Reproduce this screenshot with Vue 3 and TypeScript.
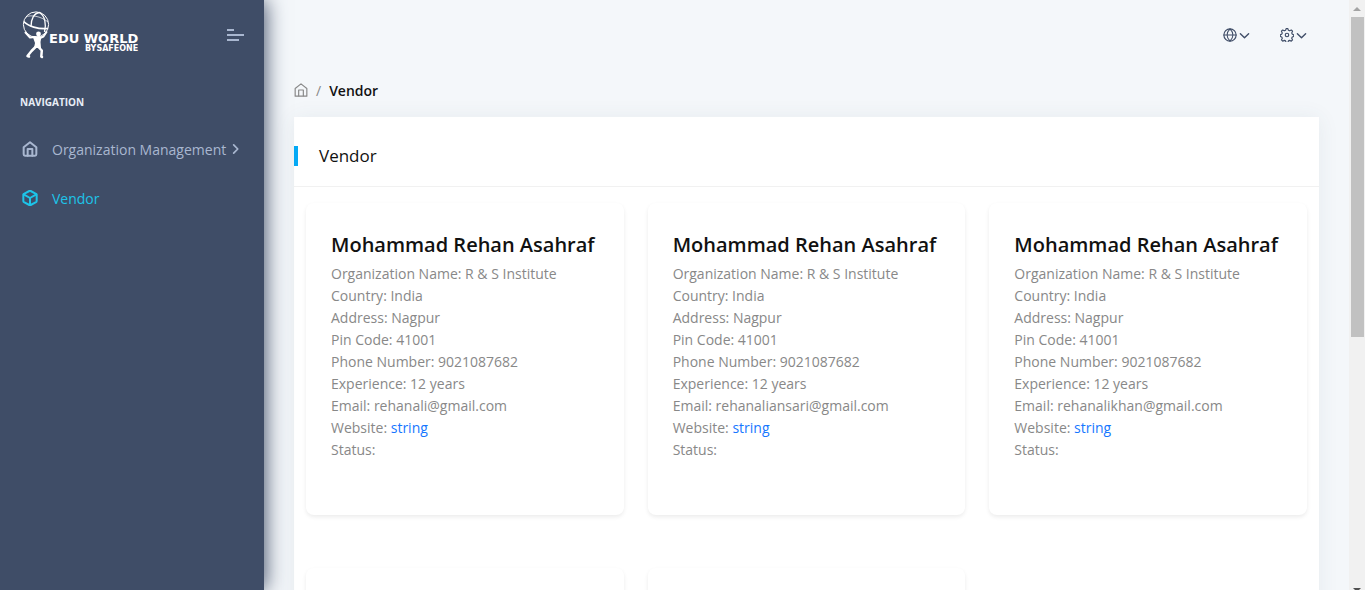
<script setup lang="ts">
interface Vendor {
  id: number
  name: string
  email: string
}

const vendors: Vendor[] = [
  { id: 1, name: 'Mohammad Rehan Asahraf', email: 'rehanali@gmail.com' },
  { id: 2, name: 'Mohammad Rehan Asahraf', email: 'rehanaliansari@gmail.com' },
  { id: 3, name: 'Mohammad Rehan Asahraf', email: 'rehanalikhan@gmail.com' },
]

const pending: number[] = [4, 5]
</script>

<template>
  <div class="layout">
    <aside class="sidebar">
      <div class="brand-row">
        <a class="brand" href="#" aria-label="Edu World by SafeOne">
          <svg class="brand-figure" width="30" height="50" viewBox="0 0 30 50" aria-hidden="true">
            <g fill="none" stroke="#fff">
              <circle cx="15" cy="14.500" r="12.600" stroke-width="1" />
              <path d="M2.700 11.500 C7 16 17 19.500 27 18.500" stroke-width="1.700" />
              <path d="M5 7 C9 4.500 20 6 27 12" stroke-width=".7" />
              <path d="M10 16.500 C10 9 13 3 18.500 2.500 C24 6 25.500 14 23.500 22" stroke-width="1.300" />
            </g>
            <g fill="none" stroke="#fff" stroke-linecap="round" stroke-linejoin="round">
              <path d="M4.500 22.500 L9 27.500 L14 27" stroke-width="2" />
              <path d="M25.500 22 L22.500 26.500 L19 28" stroke-width="2" />
              <path d="M15 36.500 L10.500 41 L6.500 46 L8 46.500" stroke-width="2.500" />
              <path d="M17 36.500 L20.800 40.500 L20.300 46.500 L21 47" stroke-width="2.500" />
            </g>
            <circle cx="17.500" cy="24" r="2.400" fill="#fff" />
            <path d="M11.500 26 L20.500 26.500 L19.500 32 L20 38 L13 38 L14 33 Z" fill="#fff" />
          </svg>
          <span class="brand-words">
            <span class="brand-name">EDU WORLD</span>
            <span class="brand-by">BYSAFEONE</span>
          </span>
        </a>
        <button class="burger" type="button" aria-label="Toggle menu">
          <i class="bar short"></i>
          <i class="bar long"></i>
          <i class="bar mid"></i>
        </button>
      </div>
      <nav>
        <h6 class="caption">NAVIGATION</h6>
        <a class="nav-item" href="#">
          <svg class="feather" width="16" height="16" viewBox="0 0 24 24">
            <path d="M2.500 9.500 12 2l9.500 7.500V20a2 2 0 0 1-2 2h-15a2 2 0 0 1-2-2z" />
            <path d="M8.500 22V12h7v10" />
          </svg>
          <span>Organization Management</span>
          <svg class="feather arrow" width="14" height="14" viewBox="0 0 24 24"><path d="m8 19 7-7-7-7" /></svg>
        </a>
        <a class="nav-item active" href="#">
          <svg class="feather" width="16" height="16" viewBox="0 0 24 24">
            <path d="M22 16.500v-9a2 2 0 0 0-1-1.700l-8-4.300a2 2 0 0 0-2 0L3 5.800a2 2 0 0 0-1 1.700v9a2 2 0 0 0 1 1.700l8 4.300a2 2 0 0 0 2 0l8-4.300a2 2 0 0 0 1-1.700z" />
            <path d="M2.500 6.500 12 12l9.500-5.500M12 22.500V12" />
          </svg>
          <span>Vendor</span>
        </a>
      </nav>
    </aside>

    <div class="page">
      <header class="topbar">
        <button class="tool" type="button" aria-label="Language">
          <svg class="feather" width="14" height="14" viewBox="0 0 24 24">
            <circle cx="12" cy="12" r="10.500" />
            <path d="M1.500 12h21M12 1.500c6.500 6.500 6.500 14.500 0 21c-6.500-6.500-6.500-14.500 0-21z" />
          </svg>
          <svg class="feather" width="11" height="11" viewBox="0 0 24 24"><path d="m3 8 9 9 9-9" /></svg>
        </button>
        <button class="tool" type="button" aria-label="Settings">
          <svg class="feather" width="14" height="14" viewBox="0 0 24 24">
            <circle cx="12" cy="12" r="3" />
            <path d="M9.500 4 10.500 1h3l1 3 2 .8 2.900-1.400 2.100 2.100-1.400 2.900.9 2.100 2.500 1v3l-2.500 1-.9 2.100 1.400 2.900-2.100 2.100-2.900-1.400-2 .8-1 3h-3l-1-3-2-.8-2.900 1.400-2.100-2.100 1.400-2.900-.9-2.100-2.500-1v-3l2.500-1 .9-2.100-1.400-2.900 2.100-2.100 2.900 1.400z" />
          </svg>
          <svg class="feather" width="11" height="11" viewBox="0 0 24 24"><path d="m3 8 9 9 9-9" /></svg>
        </button>
      </header>

      <nav class="crumbs" aria-label="Breadcrumb">
        <a class="crumb-home" href="#" aria-label="Home">
          <svg class="feather" width="14" height="14" viewBox="0 0 24 24">
            <path d="M2 9.500 12 1.500l10 8V22.500H2z" />
            <path d="M8 22V12h8v10" />
          </svg>
        </a>
        <span class="slash">/</span>
        <span class="crumb-current">Vendor</span>
      </nav>

      <main class="panel">
        <div class="panel-head"><h5>Vendor</h5></div>
        <div class="grid">
          <article v-for="v in vendors" :key="v.id" class="card">
            <h2>{{ v.name }}</h2>
            <p>Organization Name: R &amp; S Institute</p>
            <p>Country: India</p>
            <p>Address: Nagpur</p>
            <p>Pin Code: 41001</p>
            <p>Phone Number: 9021087682</p>
            <p>Experience: 12 years</p>
            <p>Email: {{ v.email }}</p>
            <p>Website: <a href="#">string</a></p>
            <p>Status:</p>
          </article>
          <article v-for="id in pending" :key="id" class="card"></article>
        </div>
      </main>
    </div>

    <div class="scrollbar" aria-hidden="true">
      <i class="up"></i>
      <i class="thumb"></i>
      <i class="down"></i>
    </div>
  </div>
</template>

<style>
body {
  margin: 0;
  overflow: hidden;
}
</style>

<style scoped>
* {
  box-sizing: border-box;
}
.layout {
  display: flex;
  height: 100vh;
  overflow: hidden;
  background: #f4f7fa;
  font-family: "Open Sans", sans-serif;
  font-size: 14px;
  color: #888;
}
a {
  text-decoration: none;
}
button {
  border: 0;
  padding: 0;
  background: none;
  color: inherit;
}
.feather {
  flex: none;
  fill: none;
  stroke: currentColor;
  stroke-width: 2;
  stroke-linecap: round;
  stroke-linejoin: round;
}
.sidebar {
  flex: 0 0 264px;
  z-index: 1;
  background: #3f4d67;
  box-shadow: 1px 0 20px 0 #3f4d67;
  color: #a9b7d0;
}
.brand-row {
  display: flex;
  align-items: center;
  justify-content: space-between;
  height: 70px;
  padding: 0 20px 0 21px;
}
.brand {
  display: flex;
  align-items: center;
  color: #fff;
}
.brand-figure {
  flex: none;
}
.brand-words {
  display: flex;
  flex-direction: column;
  align-items: flex-end;
  margin-left: -2px;
  padding-top: 16px;
  font-family: "DejaVu Sans", sans-serif;
  font-weight: 700;
  white-space: nowrap;
}
.brand-name {
  font-size: 13px;
  line-height: 12px;
}
.brand-by {
  font-size: 8px;
  line-height: 8px;
}
.burger {
  display: flex;
  flex-direction: column;
  gap: 3px;
}
.bar {
  height: 2px;
  background: #a9b7d0;
}
.short {
  width: 7px;
}
.long {
  width: 17px;
}
.mid {
  width: 12px;
}
.caption {
  margin: 0;
  padding: 24px 20px 15px;
  font-size: 10px;
  line-height: 16px;
  font-weight: 700;
  color: #e8edf7;
}
.nav-item {
  display: flex;
  align-items: center;
  height: 40px;
  margin: 4px 0 9px;
  padding-left: 22px;
  color: #a9b7d0;
  white-space: nowrap;
}
.nav-item .feather {
  stroke-width: 3;
}
.nav-item span {
  margin-left: 14px;
}
.nav-item .arrow {
  margin-left: 3px;
}
.active {
  color: #1dc4e9;
}
.page {
  flex: 1;
  min-width: 0;
  padding: 0 30px;
}
.topbar {
  display: flex;
  justify-content: flex-end;
  align-items: center;
  gap: 30px;
  height: 70px;
  padding-right: 12px;
  color: #3f4d67;
}
.tool {
  display: flex;
  align-items: center;
  gap: 2px;
}
.tool .feather + .feather {
  stroke-width: 3;
}
.crumbs {
  display: flex;
  align-items: center;
  height: 20px;
  margin: 10px 0 17px;
}
.crumb-home {
  display: flex;
  color: #888;
}
.slash {
  margin: 0 8px;
}
.crumb-current {
  font-weight: 600;
  color: #111;
}
.panel {
  background: #fff;
  box-shadow: 0 1px 20px 0 rgba(69, 90, 100, 0.08);
}
.panel-head {
  display: flex;
  align-items: center;
  height: 70px;
  padding-top: 8px;
  border-bottom: 1px solid #f1f1f1;
}
.panel-head h5 {
  margin: 0;
  padding-left: 21px;
  border-left: 4px solid #04a9f5;
  font-size: 17px;
  line-height: 20px;
  font-weight: 400;
  color: #111;
}
.grid {
  display: grid;
  grid-template-columns: repeat(3, 1fr);
  gap: 53px 24px;
  padding: 16px 12px;
}
.card {
  min-height: 312px;
  padding: 28px 25px;
  border-radius: 8px;
  background: #fff;
  box-shadow: 0 2px 4px rgba(0, 0, 0, 0.08);
}
.card h2 {
  margin: 0 0 4px;
  font-size: 20px;
  line-height: 28px;
  font-weight: 600;
  color: #111;
  white-space: nowrap;
}
.card p {
  margin: 0;
  line-height: 22px;
}
.card a {
  color: #1677ff;
}
.scrollbar {
  display: flex;
  flex: 0 0 16px;
  flex-direction: column;
  align-items: center;
  background: #f1f1f1;
}
.up,
.down {
  border: 4px solid transparent;
}
.up {
  margin: 3px 0 6px;
  border-bottom-color: #a3a3a3;
}
.thumb {
  width: 13px;
  height: 320px;
  background: #c1c1c1;
}
.down {
  margin: auto 0 -6px;
  border-top-color: #505050;
}
</style>
